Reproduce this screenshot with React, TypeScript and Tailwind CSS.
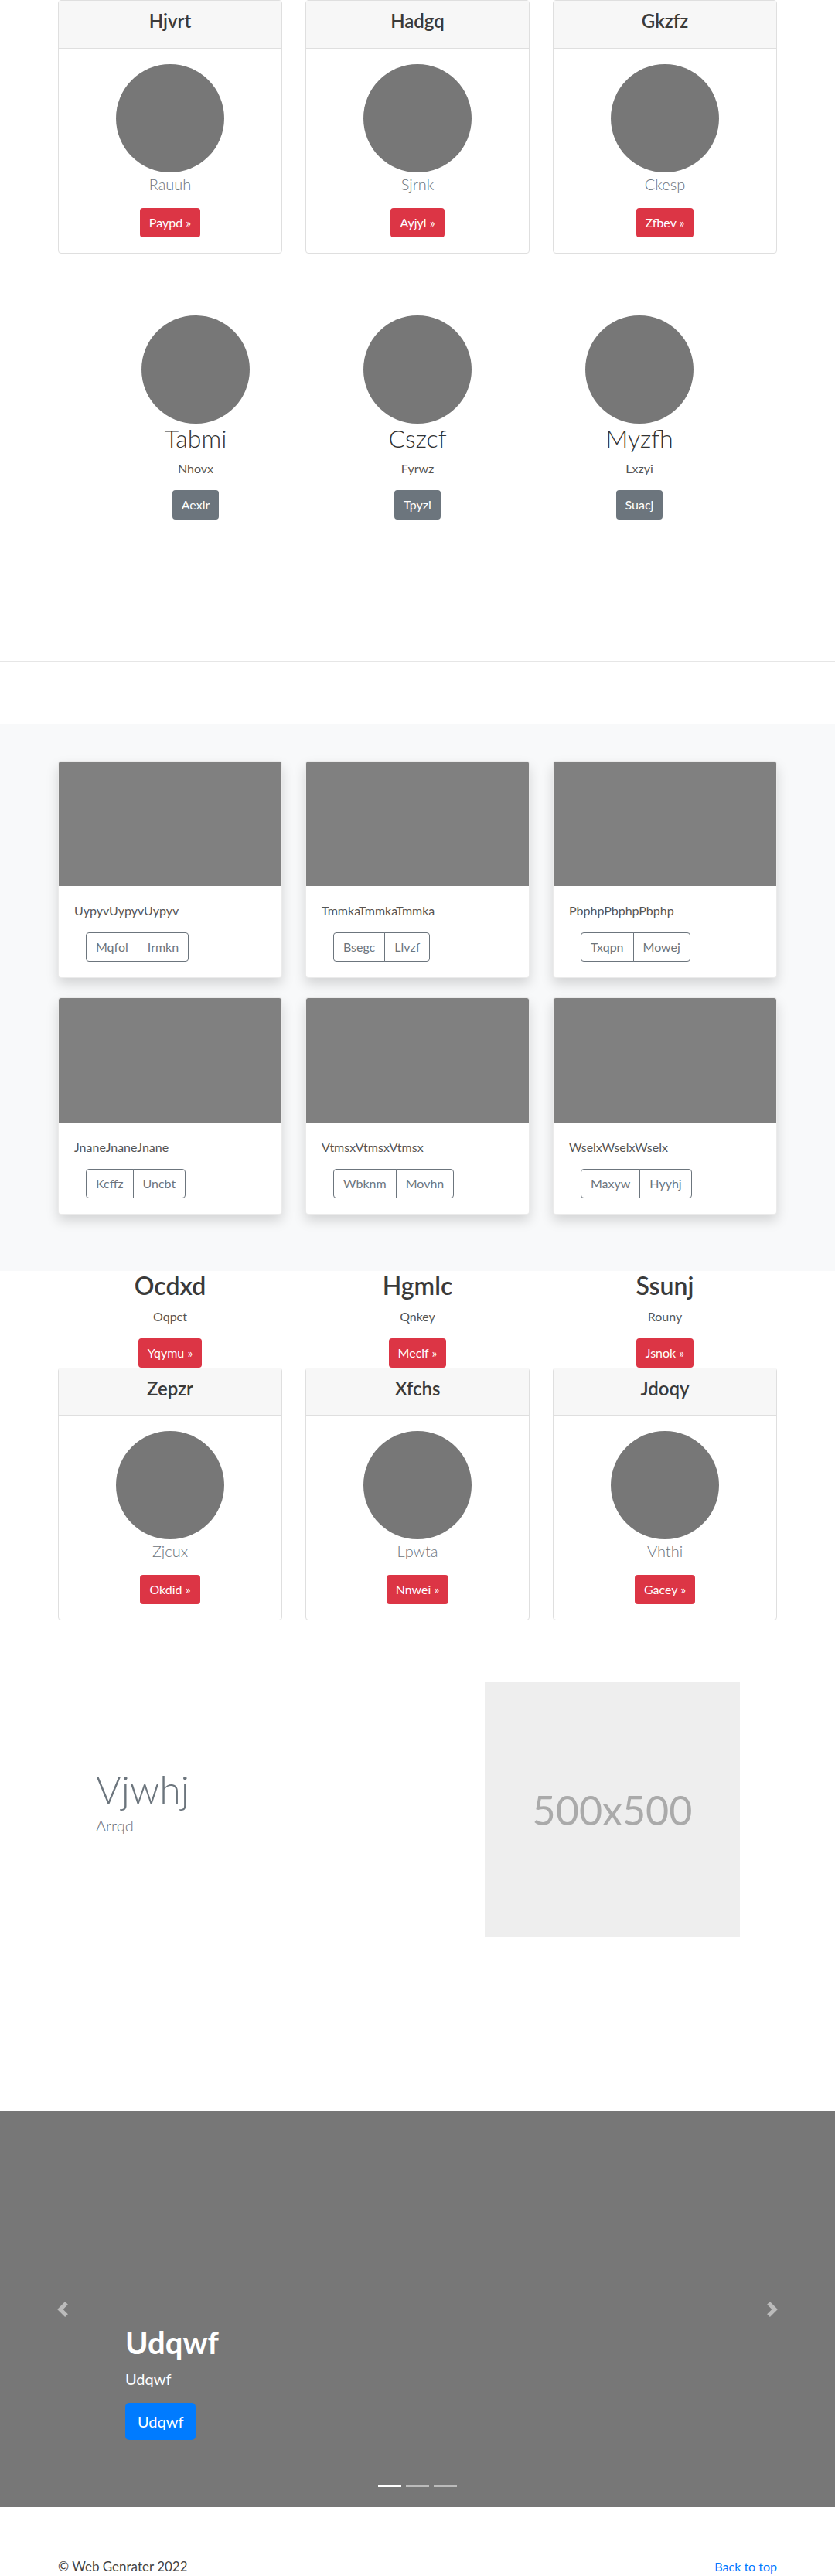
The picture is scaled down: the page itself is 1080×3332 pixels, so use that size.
import React from 'react';

type Trio = { title: string; sub: string; btn: string };

const topCards: Trio[] = [
  { title: 'Hjvrt', sub: 'Rauuh', btn: 'Paypd' },
  { title: 'Hadgq', sub: 'Sjrnk', btn: 'Ayjyl' },
  { title: 'Gkzfz', sub: 'Ckesp', btn: 'Zfbev' },
];

const people: Trio[] = [
  { title: 'Tabmi', sub: 'Nhovx', btn: 'Aexlr' },
  { title: 'Cszcf', sub: 'Fyrwz', btn: 'Tpyzi' },
  { title: 'Myzfh', sub: 'Lxzyi', btn: 'Suacj' },
];

const album = [
  { text: 'UypyvUypyvUypyv', a: 'Mqfol', b: 'Irmkn' },
  { text: 'TmmkaTmmkaTmmka', a: 'Bsegc', b: 'Llvzf' },
  { text: 'PbphpPbphpPbphp', a: 'Txqpn', b: 'Mowej' },
  { text: 'JnaneJnaneJnane', a: 'Kcffz', b: 'Uncbt' },
  { text: 'VtmsxVtmsxVtmsx', a: 'Wbknm', b: 'Movhn' },
  { text: 'WselxWselxWselx', a: 'Maxyw', b: 'Hyyhj' },
];

const headings: Trio[] = [
  { title: 'Ocdxd', sub: 'Oqpct', btn: 'Yqymu' },
  { title: 'Hgmlc', sub: 'Qnkey', btn: 'Mecif' },
  { title: 'Ssunj', sub: 'Rouny', btn: 'Jsnok' },
];

const bottomCards: Trio[] = [
  { title: 'Zepzr', sub: 'Zjcux', btn: 'Okdid' },
  { title: 'Xfchs', sub: 'Lpwta', btn: 'Nnwei' },
  { title: 'Jdoqy', sub: 'Vhthi', btn: 'Gacey' },
];

function PricingCard({ title, sub, btn }: Trio) {
  return (
    <div className="flex flex-col rounded border border-[#dfdfdf] bg-white">
      <div className="border-b border-[#dfdfdf] bg-[#f7f7f7] px-5 py-3">
        <h4 className="mb-2 text-center text-2xl leading-[28.8px] font-semibold text-[#3a3a3a]">{title}</h4>
      </div>
      <div className="flex flex-col items-center p-5">
        <div className="h-[140px] w-[140px] rounded-full bg-[#777]" />
        <p className="mb-4 text-xl leading-[30px] font-light text-[#6c757d]">{sub}</p>
        <button className="h-[38px] rounded bg-[#dc3545] px-3 text-base leading-6 text-white">
          {btn} &raquo;
        </button>
      </div>
    </div>
  );
}

function Chevron({ flip }: { flip?: boolean }) {
  return (
    <svg width="20" height="20" viewBox="0 0 8 8" className={flip ? 'rotate-180' : ''}>
      <path d="M5.25 0l-4 4 4 4 1.5-1.5L4.25 4l2.5-2.5L5.25 0z" fill="#fff" fillOpacity="0.5" />
    </svg>
  );
}

export default function App() {
  return (
    <div className="bg-white font-['Lato','Liberation_Sans',sans-serif] text-[#212529]">
      {/* pricing cards */}
      <div className="mx-auto grid w-[930px] grid-cols-3 gap-x-[30px]">
        {topCards.map((c) => (
          <PricingCard key={c.title} {...c} />
        ))}
      </div>

      {/* people row */}
      <div className="mx-auto mt-[80px] grid w-[861px] grid-cols-3">
        {people.map((p) => (
          <div key={p.title} className="flex flex-col items-center">
            <div className="h-[140px] w-[140px] rounded-full bg-[#777]" />
            <h2 className="mb-2 text-[32px] leading-[38.4px] font-light text-[#333]">{p.title}</h2>
            <p className="mb-4 leading-6 text-[#555]">{p.sub}</p>
            <button className="h-[38px] rounded bg-[#6c757d] px-3 leading-6 text-white">{p.btn}</button>
          </div>
        ))}
      </div>

      <hr className="mt-[183px] border-0 border-t border-[#e6e6e6]" />

      {/* album */}
      <section className="mt-[80px] bg-[#f8f9fa] pt-12 pb-[73px]">
        <div className="mx-auto grid w-[930px] grid-cols-3 gap-x-[30px] gap-y-[25px]">
          {album.map((a) => (
            <div
              key={a.text}
              className="overflow-hidden rounded border border-black/[.08] bg-white shadow-[0_8px_16px_rgba(0,0,0,0.15)]"
            >
              <div className="h-[161px] bg-[#808080]" />
              <div className="p-5">
                <p className="mb-4 leading-6 text-[#555]">{a.text}</p>
                <div className="ml-[15px] inline-flex">
                  <button className="h-[38px] rounded-l border border-[#6c757d] px-3 leading-6 text-[#6c757d]">
                    {a.a}
                  </button>
                  <button className="-ml-px h-[38px] rounded-r border border-[#6c757d] px-3 leading-6 text-[#6c757d]">
                    {a.b}
                  </button>
                </div>
              </div>
            </div>
          ))}
        </div>
      </section>

      {/* headings + cards */}
      <div className="mx-auto grid w-[930px] grid-cols-3 gap-x-[30px]">
        {headings.map((h) => (
          <div key={h.title} className="flex flex-col items-center">
            <h2 className="mb-2 text-[32px] leading-[38.4px] font-semibold text-[#3a3a3a]">{h.title}</h2>
            <p className="mb-4 leading-6 text-[#555]">{h.sub}</p>
            <button className="h-[38px] rounded bg-[#dc3545] px-3 leading-6 text-white">{h.btn} &raquo;</button>
          </div>
        ))}
      </div>
      <div className="mx-auto grid w-[930px] grid-cols-3 gap-x-[30px]">
        {bottomCards.map((c) => (
          <PricingCard key={c.title} {...c} />
        ))}
      </div>

      {/* feature */}
      <section className="mx-auto mt-[80px] grid w-[930px] grid-cols-2">
        <div className="pt-[108px] pl-[49px]">
          <h1 className="mb-[2px] text-[50px] leading-[60px] font-light text-[#6c757d]">Vjwhj</h1>
          <p className="text-xl leading-[30px] font-light text-[#6c757d]">Arrqd</p>
        </div>
        <div className="pl-[87px]">
          <div className="flex h-[330px] w-[330px] items-center justify-center bg-[#eee] text-[52px] text-[#aaa]">
            500x500
          </div>
        </div>
      </section>

      <hr className="mt-[145px] border-0 border-t border-[#e6e6e6]" />

      {/* carousel */}
      <section className="relative mt-[79px] h-[512px] bg-[#777]">
        <div className="absolute inset-y-0 left-0 flex w-[15%] items-center justify-center">
          <Chevron />
        </div>
        <div className="absolute inset-y-0 right-0 flex w-[15%] items-center justify-center">
          <Chevron flip />
        </div>
        <div className="absolute right-[15%] bottom-[87px] left-[15%] text-white">
          <h1 className="mb-2 text-[40px] leading-[48px] font-bold">Udqwf</h1>
          <p className="mb-4 text-xl leading-[30px]">Udqwf</p>
          <button className="h-12 rounded-[5px] bg-[#007bff] px-4 text-xl leading-[30px] text-white">Udqwf</button>
        </div>
        <div className="absolute right-0 bottom-4 left-0 flex justify-center">
          <span className="mx-[3px] my-[10px] h-[3px] w-[30px] bg-white" />
          <span className="mx-[3px] my-[10px] h-[3px] w-[30px] bg-white/50" />
          <span className="mx-[3px] my-[10px] h-[3px] w-[30px] bg-white/50" />
        </div>
      </section>

      <footer className="mx-auto mt-[65px] flex w-[930px] justify-between pb-4 leading-6">
        <p className="text-[17px] text-[#444]">&copy; Web Genrater 2022</p>
        <a href="#" className="text-[#007bff]">
          Back to top
        </a>
      </footer>
    </div>
  );
}
